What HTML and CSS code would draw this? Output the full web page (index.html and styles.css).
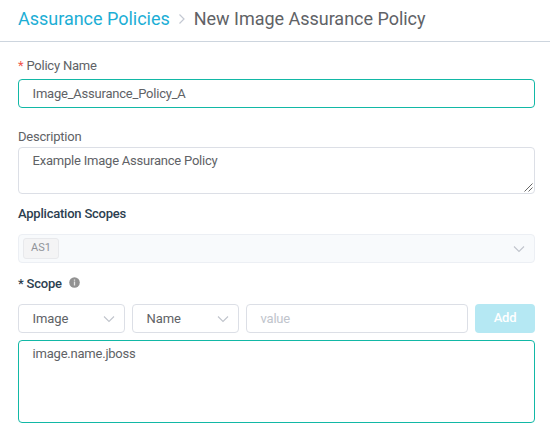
FILE: index.html
```
<!DOCTYPE html>
<html lang="en">
<head>
<meta charset="utf-8">
<title>New Image Assurance Policy</title>
<link rel="stylesheet" href="styles.css">
</head>
<body>
<header class="breadcrumb">
  <a class="crumb-link">Assurance Policies</a>
  <svg class="crumb-sep" width="8" height="12" viewBox="0 0 8 12"><path d="M1.5 1.5 6 6 1.5 10.5"/></svg>
  <span class="crumb-current">New Image Assurance Policy</span>
</header>
<main class="form">
  <div class="label"><span class="required">*</span> Policy Name</div>
  <div class="field active name">Image_Assurance_Policy_A</div>
  <div class="label">Description</div>
  <div class="field area description">Example Image Assurance Policy
    <svg class="grip" width="9" height="9" viewBox="0 0 9 9"><path d="M.5 8.5l8-8M4.5 8.5l4-4"/></svg>
  </div>
  <div class="label strong">Application Scopes</div>
  <div class="field disabled scopes">
    <span class="tag">AS1</span>
    <svg class="chevron" width="12" height="8" viewBox="0 0 12 8"><path d="M1 1.5l5 5 5-5"/></svg>
  </div>
  <div class="label strong scope-label">* Scope
    <svg class="info" width="11" height="11" viewBox="0 0 11 11"><circle cx="5.5" cy="5.5" r="5.3"/><path d="M5.5 2.4v1.3M5.5 4.6v3.9"/></svg>
  </div>
  <div class="row">
    <div class="field select">Image<svg class="chevron" width="12" height="8" viewBox="0 0 12 8"><path d="M1 1.5l5 5 5-5"/></svg></div>
    <div class="field select">Name<svg class="chevron" width="12" height="8" viewBox="0 0 12 8"><path d="M1 1.5l5 5 5-5"/></svg></div>
    <div class="field value">value</div>
    <div class="add">Add</div>
  </div>
  <div class="field area active result">image.name.jboss</div>
</main>
</body>
</html>
```
FILE: styles.css
```
* { box-sizing: border-box; }
body {
  margin: 0;
  background: #fff;
  color: #606266;
  font: 13px/20px Roboto, sans-serif;
  letter-spacing: -.22px;
  overflow: hidden;
}
svg { display: block; flex: none; fill: none; }
.breadcrumb {
  display: flex;
  align-items: center;
  height: 42px;
  padding: 0 18px 4px;
  border-bottom: 1px solid #cdd5de;
  font-size: 18px;
  letter-spacing: -.02px;
  white-space: nowrap;
}
.crumb-link { color: #1caed5; }
.crumb-sep { margin: 0 8px; stroke: #c3c8d2; stroke-width: 1.2; }
.form { padding: 14px 15px 0 18px; }
.label { height: 20px; }
.required { color: #f0564a; }
.strong { color: #2c3e50; font-weight: 500; }
.field {
  display: flex;
  align-items: center;
  height: 29px;
  padding: 0 10px 0 13.6px;
  border: 1px solid #dcdfe6;
  border-radius: 4px;
}
.active { border-color: #12b8a6; }
.name { margin: 3px 0 19px; }
.area { align-items: flex-start; padding-top: 3px; }
.description { position: relative; height: 47px; margin: 0 0 10px; }
.grip { position: absolute; right: 1px; bottom: 1px; stroke: #555; stroke-width: .9; }
.disabled { justify-content: space-between; padding: 0 9px 0 4px; background: #f8fafc; border-color: #eceff4; }
.scopes { margin: 10px 0 11px; }
.tag {
  height: 21px;
  width: 36px;
  border: 1px solid #e8e9ec;
  border-radius: 3px;
  background: #f4f4f5;
  color: #909399;
  font-size: 11px;
  letter-spacing: 0;
  line-height: 17px;
  text-align: center;
}
.chevron { stroke: #c0c4cc; stroke-width: 1.1; }
.scope-label { display: flex; align-items: center; gap: 7px; margin-bottom: 10px; }
.info { margin-bottom: 3px; }
.info circle { fill: #929292; }
.info path { stroke: #e4e4e4; stroke-width: 1.3; }
.row { display: flex; gap: 7px; margin-bottom: 7px; }
.select { width: 107px; justify-content: space-between; padding-right: 9px; letter-spacing: -.1px; }
.value { flex: 1; color: #c0c4cc; }
.add {
  width: 60px;
  border-radius: 4px;
  background: #b5e8f3;
  color: #fff;
  font-weight: 500;
  line-height: 27px;
  text-align: center;
}
.result { height: 83px; }
```
